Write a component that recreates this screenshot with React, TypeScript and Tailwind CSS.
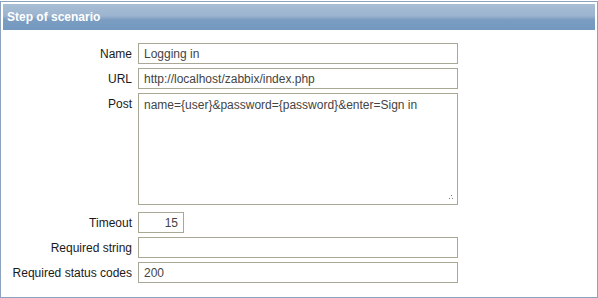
import React from "react";

const font = { fontFamily: '"Liberation Sans", Arial, sans-serif' };

function Row({ label, children, top, className = "" }: { label: string; children: React.ReactNode; top?: boolean; className?: string }) {
  return (
    <div className={`flex gap-[6px] ${top ? "items-start" : "items-center"} ${className}`}>
      <div className={`w-[129px] shrink-0 text-right text-[12px] leading-[14px] text-[#1a1a1a] ${top ? "pt-[4px]" : ""}`}>
        {label}
      </div>
      {children}
    </div>
  );
}

const inputCls =
  "h-[21px] border border-[#a9a796] bg-white px-[5px] text-[12px] leading-[14px] text-[#444] outline-none";

export default function App() {
  return (
    <div style={font} className="w-[598px] h-[298px] bg-white">
      <div className="mt-px h-[297px] border border-[#8ba3be] p-[2px] flex flex-col">
        <div className="h-[26px] shrink-0 flex items-center pl-[4px] bg-[linear-gradient(to_bottom,#a8bed5_0%,#9cb4cf_45%,#7b9dc2_60%,#7498be_100%)] text-white font-bold text-[12px]">
          Step of scenario
        </div>
        <div className="flex flex-col gap-[4px] pt-[13px]">
          <Row label="Name">
            <input readOnly value="Logging in" style={font} className={`${inputCls} w-[320px]`} />
          </Row>
          <Row label="URL">
            <input readOnly value="http://localhost/zabbix/index.php" style={font} className={`${inputCls} w-[320px]`} />
          </Row>
          <Row label="Post" top className="mb-[3px]">
            <div className="relative">
              <textarea
                readOnly
                value="name={user}&password={password}&enter=Sign in"
                style={font}
                className="block w-[320px] h-[112px] resize-none border border-[#a9a796] bg-white px-[5px] pt-[4px] text-[12px] leading-[14px] text-[#444] outline-none"
              />
              <span className="absolute right-[5px] bottom-[6px] w-[4px] h-[4px]">
                <span className="absolute left-[2px] top-0 w-px h-px bg-[#777]" />
                <span className="absolute left-0 top-[3px] w-px h-px bg-[#777]" />
                <span className="absolute left-[3px] top-[3px] w-px h-px bg-[#777]" />
              </span>
            </div>
          </Row>
          <Row label="Timeout">
            <input readOnly value="15" style={font} className={`${inputCls} w-[46px] text-right`} />
          </Row>
          <Row label="Required string">
            <input readOnly value="" style={font} className={`${inputCls} w-[320px]`} />
          </Row>
          <Row label="Required status codes">
            <input readOnly value="200" style={font} className={`${inputCls} w-[320px]`} />
          </Row>
        </div>
      </div>
    </div>
  );
}
